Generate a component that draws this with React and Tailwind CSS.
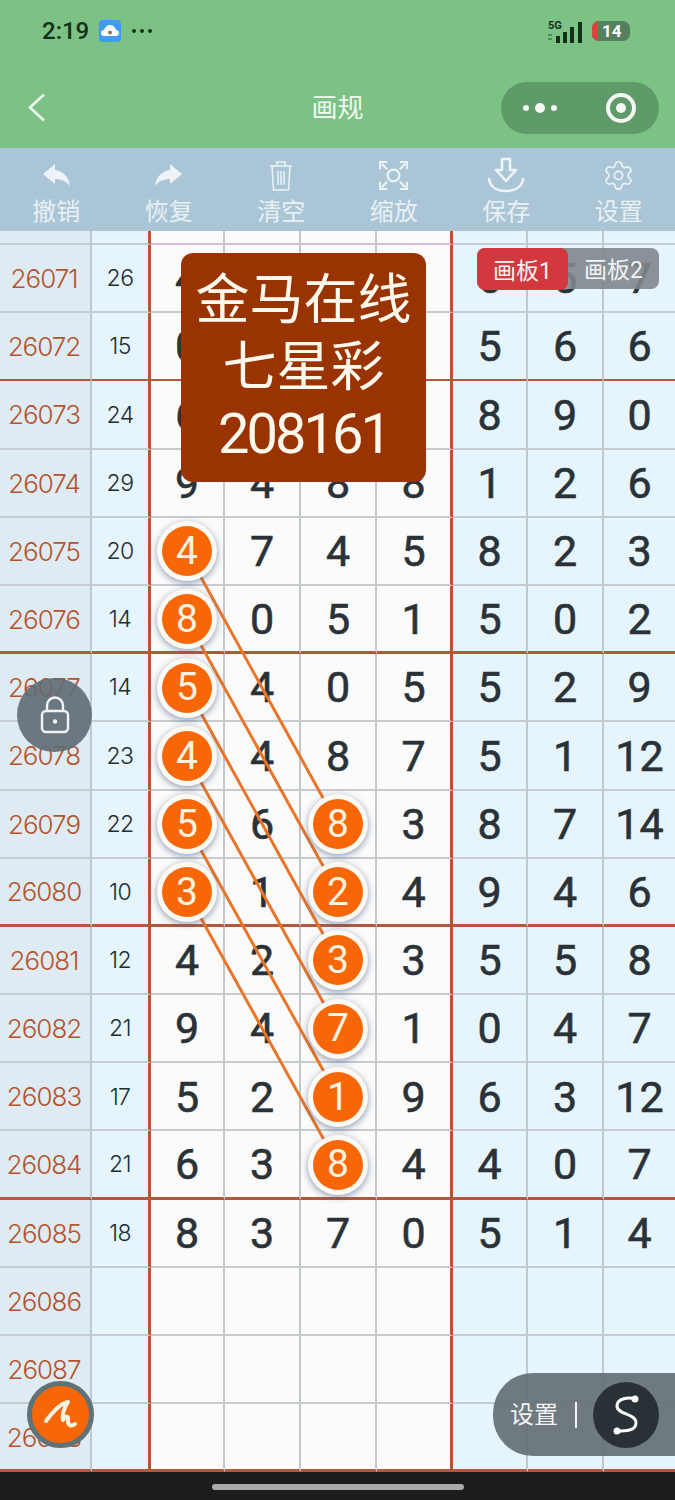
import { Settings } from "lucide-react";

const rows = [
  ["26071", "26", ["4", "", "", "", "6", "5", "7"]],
  ["26072", "15", ["0", "", "", "", "5", "6", "6"]],
  ["26073", "24", ["6", "", "", "", "8", "9", "0"]],
  ["26074", "29", ["9", "4", "8", "8", "1", "2", "6"]],
  ["26075", "20", ["4", "7", "4", "5", "8", "2", "3"], [0]],
  ["26076", "14", ["8", "0", "5", "1", "5", "0", "2"], [0]],
  ["26077", "14", ["5", "4", "0", "5", "5", "2", "9"], [0]],
  ["26078", "23", ["4", "4", "8", "7", "5", "1", "12"], [0]],
  ["26079", "22", ["5", "6", "8", "3", "8", "7", "14"], [0, 2]],
  ["26080", "10", ["3", "1", "2", "4", "9", "4", "6"], [0, 2]],
  ["26081", "12", ["4", "2", "3", "3", "5", "5", "8"], [2]],
  ["26082", "21", ["9", "4", "7", "1", "0", "4", "7"], [2]],
  ["26083", "17", ["5", "2", "1", "9", "6", "3", "12"], [2]],
  ["26084", "21", ["6", "3", "8", "4", "4", "0", "7"], [2]],
  ["26085", "18", ["8", "3", "7", "0", "5", "1", "4"]],
  ["26086", "", ["", "", "", "", "", "", ""]],
  ["26087", "", ["", "", "", "", "", "", ""]],
  ["26088", "", ["", "", "", "", "", "", ""]],
];

// ball centres, relative to the top of the table
const links = [
  [321, 594],
  [389, 662],
  [457, 730],
  [526, 798],
  [594, 866],
  [662, 934],
];

function ToolItem({ icon, label }) {
  return (
    <div className="flex flex-col items-center">
      <div className="h-[42px] flex items-center justify-center text-[#edf3f7]">{icon}</div>
      <div className="mt-[1px] text-[24px] leading-[30px] text-[#e9f0f4]">{label}</div>
    </div>
  );
}

function ReplyIcon({ className }) {
  return (
    <svg className={className} width="28" height="24" viewBox="0 0 28 24" fill="currentColor">
      <path d="M1 11 13 1v6c8 1 14 7 15 16-4-5-9-7-15-7v5z" />
    </svg>
  );
}

function Ball({ n }) {
  return (
    <div className="relative z-20 w-[60px] h-[60px] rounded-full bg-[#fdf9f4] flex items-center justify-center shadow-[0_2px_7px_rgba(70,90,130,0.6)]">
      <div className="w-[50px] h-[50px] rounded-full bg-[#f76707] flex items-center justify-center font-['Roboto'] font-normal [-webkit-text-stroke:0px] text-[39px] text-[#fff2e0]">
        {n}
      </div>
    </div>
  );
}

function Row({ id, sum, nums, marked = [], thick }) {
  const line = thick ? "border-b-[3px] border-b-[#b4583c]" : "border-b-2 border-b-[#c6cbcf]";
  const col = (i) => {
    if (i === 3) return "bg-[#fbfbfb] border-r-[3px] border-r-[#b5562f]";
    if (i === 6) return "bg-[#e6f4fd]";
    if (i > 3) return "bg-[#e6f4fd] border-r-2 border-r-[#bfc8cd]";
    return "bg-[#fbfbfb] border-r-2 border-r-[#c2c7ca]";
  };
  return (
    <div className="grid grid-cols-[92px_59px_74px_76px_76px_76px_75px_76px_71px] h-[68.2px]">
      <div className={`flex items-center justify-center pr-[2px] pt-[1px] bg-[#dfebf3] border-r-2 border-r-[#bfc8cd] font-['Inter'] font-light tracking-[-1px] text-[26px] text-[#b5532f] ${line}`}>
        {id}
      </div>
      <div className={`flex items-center justify-center pt-[1px] bg-[#e6f4fd] border-r-[3px] border-r-[#b5562f] font-['Inter'] font-light tracking-[-0.6px] text-[23px] text-[#222d33] ${line}`}>
        {sum}
      </div>
      {nums.map((n, i) => (
        <div key={i} className={`flex items-center justify-center pt-[1px] font-['Roboto'] font-normal [-webkit-text-stroke:0.6px] text-[43px] text-[#2a3238] ${col(i)} ${line}`}>
          {marked.includes(i) ? <Ball n={n} /> : n}
        </div>
      ))}
    </div>
  );
}

export default function App() {
  return (
    <div className="relative w-[675px] h-[1500px] overflow-hidden flex flex-col bg-[#1c1c1c] font-['Roboto','Noto_Sans_CJK_SC',sans-serif]">
      {/* status + title */}
      <div className="h-[148px] shrink-0 bg-[#7cc285] flex flex-col">
        <div className="h-[62px] pl-[42px] pr-[45px] flex items-center justify-between">
          <div className="flex items-center gap-[10px]">
            <span className="text-[24px] font-medium text-[#12301a]">2:19</span>
            <svg width="22" height="22" viewBox="0 0 22 22">
              <rect width="22" height="22" rx="4" fill="#3f9cf0" />
              <path d="M5 16a3 3 0 0 1 0-6c1-3 3-5 6-5s5 2 6 5a3 3 0 0 1 0 6z" fill="#fff" />
              <circle cx="11" cy="12.5" r="2" fill="#8a7a4a" />
            </svg>
            <div className="ml-[1px] flex items-center gap-[4px]">
              <span className="w-[4px] h-[4px] rounded-full bg-[#12301a]" />
              <span className="w-[4px] h-[4px] rounded-full bg-[#12301a]" />
              <span className="w-[4px] h-[4px] rounded-full bg-[#12301a]" />
            </div>
          </div>
          <div className="flex items-center gap-[9px]">
            <svg width="35" height="24" viewBox="0 0 35 24">
              <text x="0" y="10" fontSize="11" fontWeight="700" fill="#12301a" fontFamily="Roboto">5G</text>
              <rect x="0" y="15" width="4" height="2" fill="#4d8a5c" />
              <rect x="0" y="19" width="4" height="2" fill="#4d8a5c" />
              <rect x="8" y="17" width="4" height="7" fill="#12301a" />
              <rect x="15" y="13" width="4" height="11" fill="#12301a" />
              <rect x="22" y="8" width="4" height="16" fill="#12301a" />
              <rect x="30" y="3" width="4" height="21" fill="#12301a" />
            </svg>
            <div className="w-[38px] h-[20px] rounded-[7px] bg-[#55805f] overflow-hidden flex items-center">
              <div className="w-[6px] h-full bg-[#d8433a]" />
              <span className="ml-[4px] text-[17px] font-bold leading-none text-white">14</span>
            </div>
          </div>
        </div>
        <div className="relative flex-1 flex items-center justify-center">
          <svg className="absolute left-[27px] top-[31px]" width="19" height="29" viewBox="0 0 19 29" fill="none" stroke="#eef7ef" strokeWidth="2.6">
            <path d="M17 1.5 3 14.5l14 13" />
          </svg>
          <span className="text-[26px] text-[#f1f8f1] mt-[6px]">画规</span>
          <div className="absolute right-[16px] top-[20px] w-[158px] h-[52px] rounded-full bg-[#5f9a69] flex items-center pl-[22px]">
            <div className="flex items-center gap-[6px] w-[64px]">
              <span className="w-[6px] h-[6px] rounded-full bg-[#f3f8f3]" />
              <span className="w-[10px] h-[10px] rounded-full bg-[#f3f8f3]" />
              <span className="w-[6px] h-[6px] rounded-full bg-[#f3f8f3]" />
            </div>
            <div className="ml-[19px] w-[30px] h-[30px] rounded-full border-[4px] border-[#f3f8f3] flex items-center justify-center">
              <span className="w-[10px] h-[10px] rounded-full bg-[#f3f8f3]" />
            </div>
          </div>
        </div>
      </div>

      {/* toolbar */}
      <div className="h-[83px] shrink-0 bg-[#aac6d6] grid grid-cols-6 pt-[6px]">
        <ToolItem label="撤销" icon={<ReplyIcon />} />
        <ToolItem label="恢复" icon={<ReplyIcon className="-scale-x-100" />} />
        <ToolItem
          label="清空"
          icon={
            <svg width="24" height="31" viewBox="0 0 24 31" fill="none" stroke="currentColor" strokeWidth="1.5">
              <path d="M1 6h22M8 6V2h8v4M3 6l1.5 24h15L21 6M9 11v14M12 11v14M15 11v14" />
            </svg>
          }
        />
        <ToolItem
          label="缩放"
          icon={
            <svg width="29" height="29" viewBox="0 0 32 32" fill="none" stroke="currentColor" strokeWidth="2.4">
              <circle cx="16" cy="16" r="6.5" />
              <path d="M1 9V1h8M23 1h8v8M31 23v8h-8M9 31H1v-8M3 3l6 6M29 3l-6 6M29 29l-6-6M3 29l6-6" />
            </svg>
          }
        />
        <ToolItem
          label="保存"
          icon={
            <svg width="38" height="36" viewBox="0 0 38 36" fill="none" stroke="currentColor" strokeWidth="2.6" strokeLinecap="round" strokeLinejoin="round">
              <path d="M15 2h8v11h6L19 24 9 13h6zM2 22c1 8 8 12 17 12s16-4 17-12" />
            </svg>
          }
        />
        <ToolItem label="设置" icon={<Settings size={33} strokeWidth={1.2} />} />
      </div>

      {/* table */}
      <div className="relative flex-1 min-h-0 overflow-hidden">
        <div className="h-[14px] grid grid-cols-[92px_59px_74px_76px_76px_76px_75px_76px_71px]">
          <div className="bg-[#dfebf3] border-r-2 border-r-[#bfc8cd] border-b-2 border-b-[#c6cbcf]" />
          <div className="bg-[#e6f4fd] border-r-[3px] border-r-[#b5562f] border-b-2 border-b-[#c6cbcf]" />
          <div className="bg-[#fbfbfb] border-r-2 border-r-[#c2c7ca] border-b-2 border-b-[#d5bfd4]" />
          <div className="bg-[#fbfbfb] border-r-2 border-r-[#c2c7ca] border-b-2 border-b-[#d5bfd4]" />
          <div className="bg-[#fbfbfb] border-r-2 border-r-[#c2c7ca] border-b-2 border-b-[#d5bfd4]" />
          <div className="bg-[#fbfbfb] border-r-[3px] border-r-[#b5562f] border-b-2 border-b-[#d5bfd4]" />
          <div className="bg-[#e6f4fd] border-r-2 border-r-[#bfc8cd] border-b-2 border-b-[#c6cbcf]" />
          <div className="bg-[#e6f4fd] border-r-2 border-r-[#bfc8cd] border-b-2 border-b-[#c6cbcf]" />
          <div className="bg-[#e6f4fd] border-b-2 border-b-[#c6cbcf]" />
        </div>
        {rows.map(([id, sum, nums, marked], i) => (
          <Row key={id} id={id} sum={sum} nums={nums} marked={marked} thick={i % 4 === 1} />
        ))}

        <svg className="absolute left-0 top-0 z-10 pointer-events-none" width="675" height="1242">
          {links.map(([a, b]) => (
            <line key={a} x1="187" y1={a} x2="338" y2={b} stroke="#e8762a" strokeWidth="3" />
          ))}
        </svg>

        {/* title card */}
        <div className="absolute z-30 left-[181px] top-[22px] w-[245px] h-[229px] rounded-[12px] bg-[#993300] flex flex-col items-center justify-center text-[#fff8ec] text-[54px] leading-[67px]">
          <div>金马在线</div>
          <div>七星彩</div>
          <div className="text-[56px] tracking-[-3px]">208161</div>
        </div>

        {/* board tabs */}
        <div className="absolute z-30 left-[477px] top-[17px] w-[182px] h-[41px] rounded-[8px] bg-[#7d878d]/90 flex text-[23px] text-[#f4f4f4]">
          <div className="w-[91px] h-[42px] pt-[6px] rounded-[8px] bg-[#d4383f] flex items-center justify-center">画板1</div>
          <div className="w-[91px] pt-[6px] flex items-center justify-center">画板2</div>
        </div>

        {/* lock */}
        <div className="absolute z-30 left-[17px] top-[447px] w-[75px] h-[74px] rounded-full bg-[#5f6b72]/90 flex items-center justify-center">
          <svg width="30" height="38" viewBox="0 0 30 38" fill="none" stroke="#f1f3f4" strokeWidth="2.4">
            <rect x="2" y="15" width="26" height="21" rx="4" />
            <path d="M7 15V9.500a8 8 0 0 1 16 0V15" />
            <circle cx="15" cy="25.500" r="2.200" fill="#f1f3f4" stroke="none" />
          </svg>
        </div>

        {/* app button */}
        <div className="absolute z-30 left-[27px] top-[1150px] w-[67px] h-[67px] rounded-full bg-[#f76707] border-[5px] border-[#5f7278] flex items-center justify-center">
          <svg width="38" height="38" viewBox="0 0 38 38" fill="none" stroke="#fff3e0" strokeWidth="4" strokeLinecap="round" strokeLinejoin="round">
            <path d="M4 25C10 17 18 7 26 6c-4 6-6 12-5 18 3-5 6-4 5 1 0 4 3 6 7 3" />
          </svg>
        </div>

        {/* settings pill */}
        <div className="absolute z-30 right-0 top-[1142px] w-[182px] h-[83px] rounded-l-[40px] bg-[#626d72]/90 flex items-center pl-[17px]">
          <span className="text-[24px] text-[#f1f3f4]">设置</span>
          <div className="ml-[17px] w-[2px] h-[26px] bg-[#f1f3f4]" />
          <div className="ml-[16px] w-[66px] h-[66px] rounded-full bg-[#283236] flex items-center justify-center">
            <svg width="34" height="44" viewBox="0 0 34 44" fill="none" stroke="#fff" strokeWidth="3" strokeLinecap="round">
              <path d="M26 6C20 4 8 5 8 13c0 9 19 7 19 17 0 8-11 8-19 8" />
              <circle cx="26" cy="6" r="3.500" fill="#fff" stroke="none" />
              <circle cx="8" cy="38" r="3.500" fill="#fff" stroke="none" />
            </svg>
          </div>
        </div>
      </div>

      {/* nav bar */}
      <div className="h-[27px] shrink-0 flex items-center justify-center bg-[#1c1c1c]">
        <div className="w-[252px] h-[6px] rounded-full bg-[#aaaaaa]" />
      </div>
    </div>
  );
}
